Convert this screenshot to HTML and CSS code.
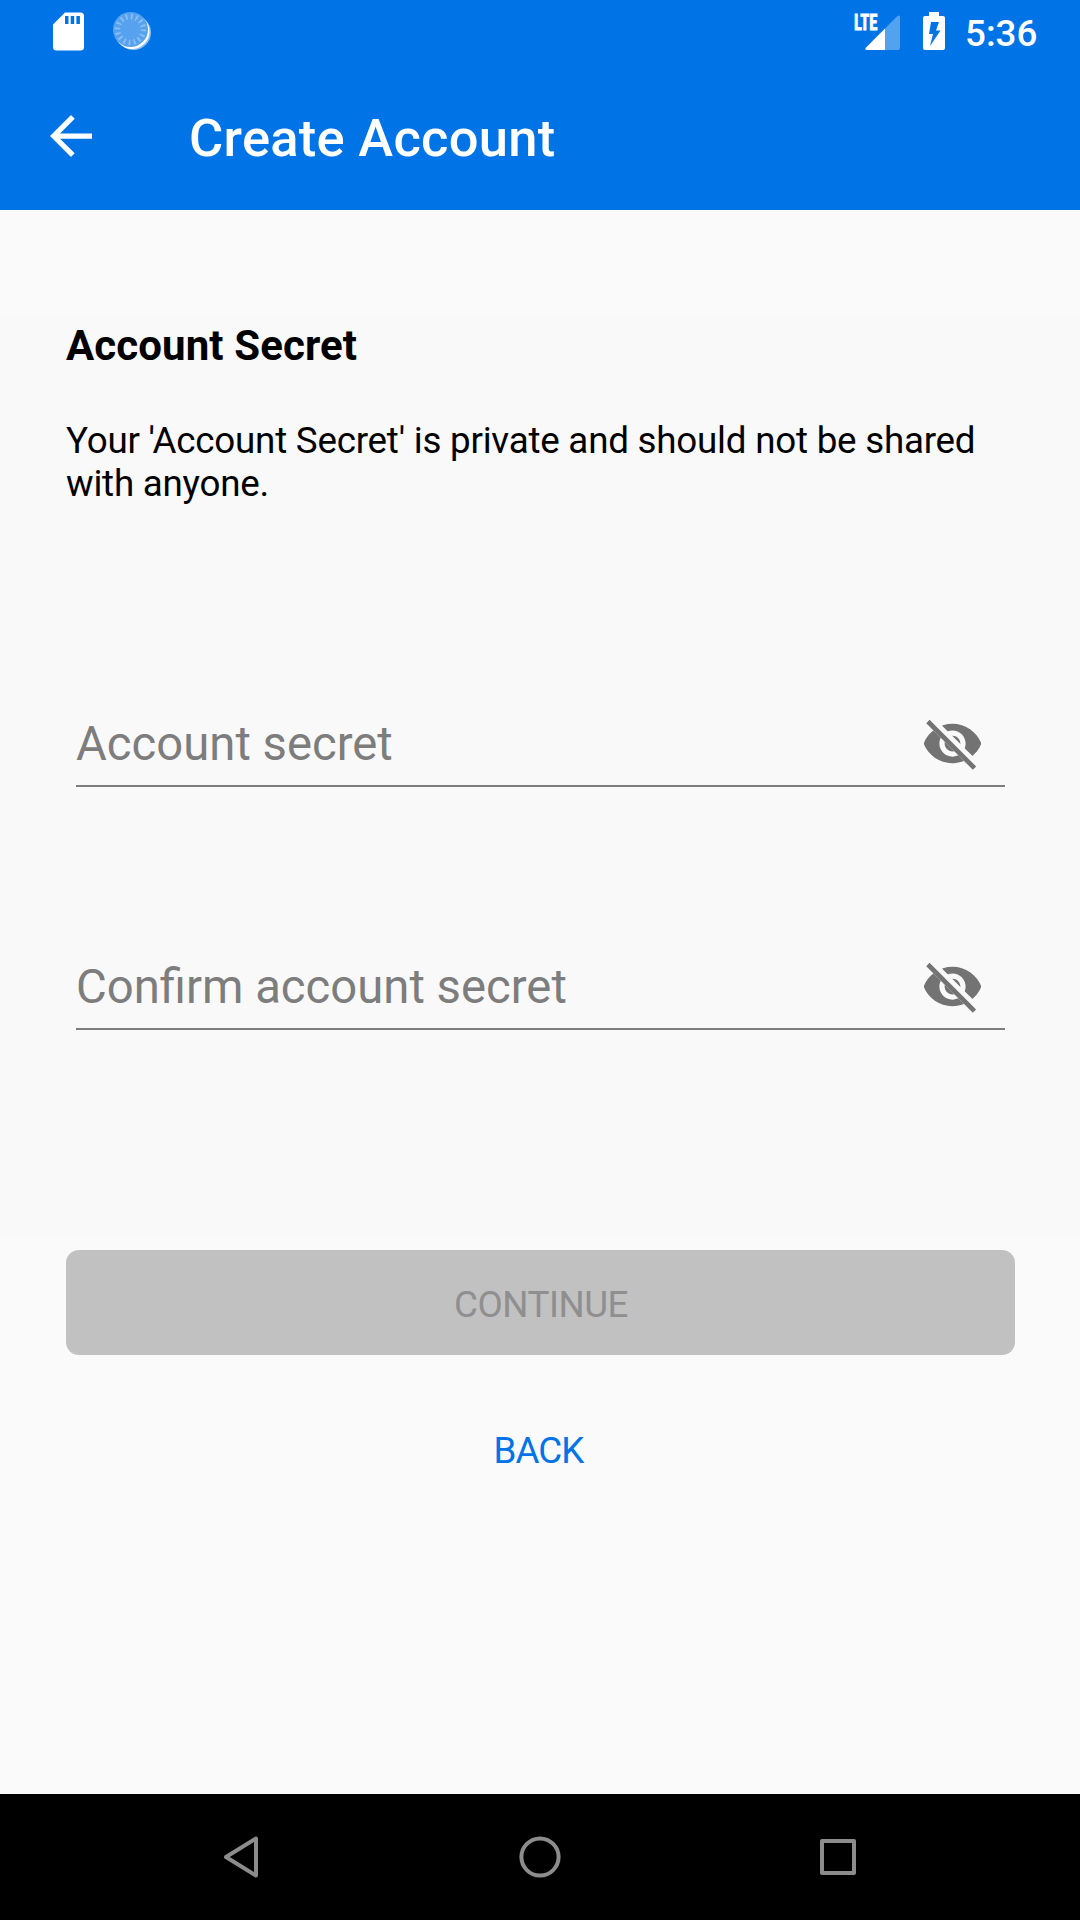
FILE: index.html
```html
<!DOCTYPE html>
<html lang="en">
<head>
<meta charset="utf-8">
<title>Create Account</title>
<link rel="stylesheet" href="styles.css">
</head>
<body>
<div class="screen">
  <header class="header">
    <div class="status">
      <svg class="sd" width="31" height="39" viewBox="0 0 31 39"><path fill="#fff" fill-rule="evenodd" d="M12 .5h15.500a3.500 3.500 0 0 1 3.500 3.500v31a3.500 3.500 0 0 1-3.500 3.500h-24A3.500 3.500 0 0 1 0 35V12.500zM12 4v8h3.500V4zm5.700 0v8h3.500V4zm5.700 0v8h3.500V4z"/></svg>
      <svg class="spinner" width="40" height="40" viewBox="0 0 40 40">
        <circle cx="20.500" cy="20.500" r="17.500" fill="#8abef5"/>
        <circle cx="19" cy="19.500" r="17.500" fill="#fff"/>
        <circle cx="17.500" cy="17.500" r="17.500" fill="#57a2ee"/>
        <circle cx="17.500" cy="17.500" r="13" fill="none" stroke="#8cc0f5" stroke-width="5.500" stroke-dasharray="1.700 3.406"/>
      </svg>
      <span class="lte">LTE</span>
      <svg class="signal" width="35" height="35" viewBox="0 0 35 35"><path fill="#53a2f0" d="M20 13.500 32.500 1Q35 -.5 35 2v31q0 2-2 2H20z"/><path fill="#fff" d="M20 13.500V35H2Q-.5 35 .8 32.700z"/></svg>
      <svg class="battery" width="22" height="38" viewBox="0 0 22 38"><path fill="#fff" fill-rule="evenodd" d="M6 0h10v4h4q2 0 2 2v30q0 2-2 2H2q-2 0-2-2V6q0-2 2-2h4zM8 10 6 22h4L7 34 17.500 18.500h-4.500L16 10z"/></svg>
      <span class="clock">5:36</span>
    </div>
    <div class="toolbar">
      <svg class="arrow" width="42" height="42" viewBox="0 0 16 16"><path fill="#fff" d="M16 7H3.830l5.590-5.590L8 0 0 8l8 8 1.410-1.410L3.830 9H16z"/></svg>
      <h1 class="title">Create Account</h1>
    </div>
  </header>
  <main class="content">
    <section class="form">
      <h2 class="heading">Account Secret</h2>
      <p class="note">Your 'Account Secret' is private and should not be shared with anyone.</p>
      <div class="field">
        <span class="hint">Account secret</span>
        <svg class="eye" width="63" height="63" viewBox="0 0 24 24"><use href="#eye-off"/></svg>
      </div>
      <div class="field">
        <span class="hint">Confirm account secret</span>
        <svg class="eye" width="63" height="63" viewBox="0 0 24 24"><use href="#eye-off"/></svg>
      </div>
    </section>
    <button class="continue" disabled>CONTINUE</button>
    <button class="back">BACK</button>
  </main>
  <nav class="nav">
    <svg width="42" height="42" viewBox="0 0 42 42"><path d="M35 2.500v37L5 21z"/></svg>
    <svg width="42" height="42" viewBox="0 0 42 42"><circle cx="21" cy="21" r="18.600"/></svg>
    <svg width="42" height="42" viewBox="0 0 42 42"><rect x="5" y="5" width="32" height="32"/></svg>
  </nav>
</div>
<svg class="defs" width="0" height="0">
  <defs>
    <clipPath id="eye-clip"><path d="M2 4.270 19.730 22l2.540-2.540L4.540 1.730V1H23v22H1V4.270z"/></clipPath>
    <g id="eye-off">
      <path clip-path="url(#eye-clip)" fill="#737373" d="M12 4.500C7 4.500 2.730 7.610 1 12c1.730 4.390 6 7.500 11 7.500s9.270-3.110 11-7.500c-1.730-4.390-6-7.500-11-7.500zM12 17c-2.760 0-5-2.240-5-5s2.240-5 5-5 5 2.240 5 5-2.240 5-5 5zm0-8c-1.660 0-3 1.340-3 3s1.340 3 3 3 3-1.340 3-3-1.340-3-3-3z"/>
      <path d="M3.270 4.270 19.740 20.740" fill="none" stroke="#737373" stroke-width="1.800" stroke-linecap="square"/>
    </g>
  </defs>
</svg>
</body>
</html>
```
FILE: styles.css
```css
* { box-sizing: border-box; margin: 0; padding: 0; }
body { font-family: Roboto, sans-serif; background: #fafafa; }
.defs { position: absolute; }
.screen {
  width: 1080px;
  height: 1920px;
  display: flex;
  flex-direction: column;
  overflow: hidden;
}
svg { display: block; flex: none; }
.header { height: 210px; background: #0073e7; color: #fff; }
.status { height: 63px; display: flex; align-items: flex-start; }
.sd { margin: 12px 0 0 53px; }
.spinner { margin: 12px 0 0 28.5px; }
.lte {
  width: 24px;
  margin: 10px 0 0 701.5px;
  font: 700 22.5px/25px "Roboto Condensed", Roboto, sans-serif;
  -webkit-text-stroke: .8px #fff;
  transform: scaleX(.74);
  transform-origin: 0 0;
  white-space: nowrap;
}
.signal { margin: 15px 0 0 -13px; }
.battery { margin: 12px 0 0 23px; }
.clock {
  margin: 12px 0 0 20px;
  font-size: 36.75px;
  line-height: 43px;
  font-weight: 500;
}
.toolbar { height: 147px; display: flex; align-items: flex-start; }
.arrow { margin: 52px 0 0 50px; }
.title {
  margin: 44px 0 0 97px;
  font-size: 52.5px;
  line-height: 62px;
  font-weight: 500;
  letter-spacing: .27px;
}
.content {
  flex: 1;
  display: flex;
  flex-direction: column;
  padding-top: 105px;
}
.form { height: 920px; padding: 6px 66px 0; background: #f9f9f9; }
.heading { font-size: 42px; line-height: 50px; font-weight: 700; letter-spacing: .1px; }
.note { margin-top: 48px; font-size: 36.75px; line-height: 43px; letter-spacing: -.23px; color: #000; }
.field {
  display: flex;
  justify-content: space-between;
  align-items: flex-start;
  height: 75px;
  margin: 207px 9px 0 10px;
  padding-right: 21px;
  border-bottom: 2px solid #7d7d7d;
}
.field + .field { margin-top: 168px; }
.hint { margin-top: 4px; font-size: 47.25px; line-height: 56px; color: #7d7d7d; }
.continue, .back {
  border: 0;
  font-family: inherit;
  font-size: 36.75px;
  line-height: 43px;
  font-weight: 400;
}
.continue {
  margin: 15px 65px 0 66px;
  height: 105px;
  padding: 3px 0 0 1px;
  border-radius: 13px;
  background: #c1c1c1;
  color: #8f8f8f;
  letter-spacing: -.5px;
}
.back {
  align-self: center;
  margin: 74px 3px 0 0;
  background: none;
  color: #0073e7;
  letter-spacing: -.9px;
}
.nav {
  height: 126px;
  background: #000;
  display: flex;
  justify-content: center;
  align-items: center;
  gap: 256px;
}
.nav svg { fill: none; stroke: #8c8c8c; stroke-width: 4; stroke-linejoin: round; }
```
